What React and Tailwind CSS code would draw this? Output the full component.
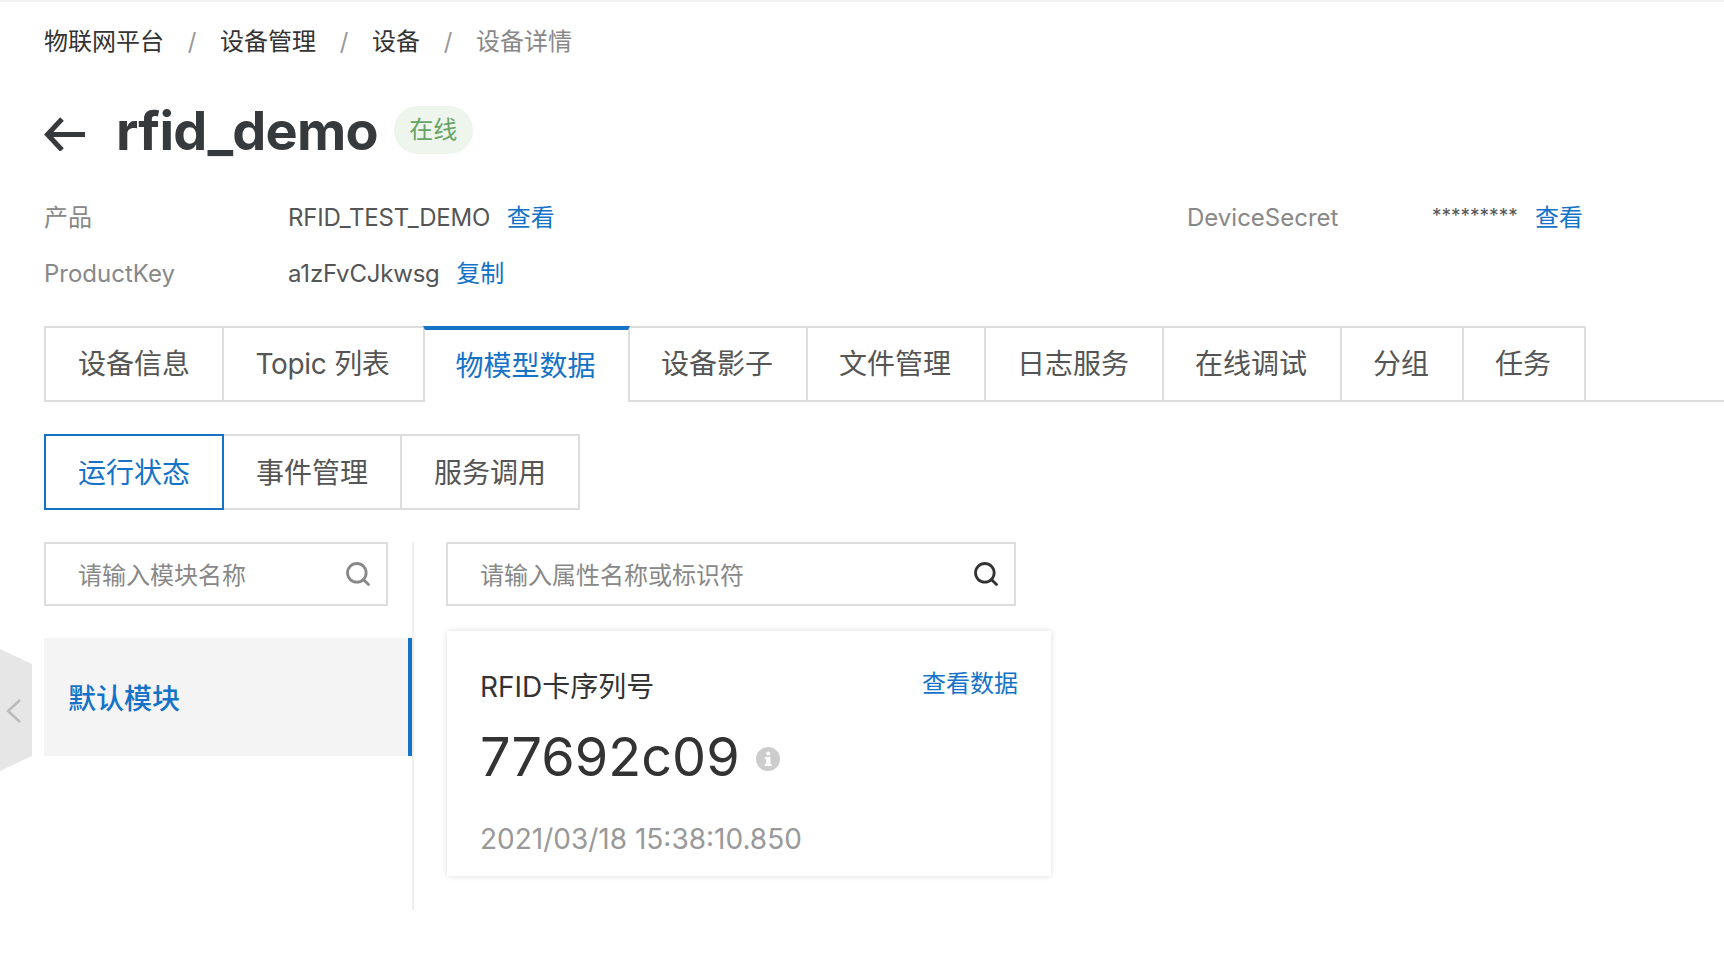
import React from 'react';
import { Search } from 'lucide-react';

const FONT = '[font-family:Inter,"Noto_Sans_CJK_SC",sans-serif]';

const mainTabs = [
    { label: '设备信息', w: 'w-[180px]' },
    { label: 'Topic 列表', w: 'w-[203px]', tight: true },
    { label: '物模型数据', w: 'w-[207px]', active: true },
    { label: '设备影子', w: 'w-[180px]' },
    { label: '文件管理', w: 'w-[180px]' },
    { label: '日志服务', w: 'w-[180px]' },
    { label: '在线调试', w: 'w-[180px]' },
    { label: '分组', w: 'w-[124px]' },
    { label: '任务', w: 'w-[124px]' },
];

function Breadcrumb() {
    return (
        <div className="flex items-center h-[34px] text-[24px] leading-[34px] text-[#333]">
            <span>物联网平台</span>
            <span className="w-[56px] text-center text-[#999]">/</span>
            <span>设备管理</span>
            <span className="w-[56px] text-center text-[#999]">/</span>
            <span>设备</span>
            <span className="w-[56px] text-center text-[#999]">/</span>
            <span className="text-[#888]">设备详情</span>
        </div>
    );
}

function InfoRows() {
    return (
        <div className="mt-[27px] grid grid-cols-[244px_899px_245px_auto] grid-rows-[56px_56px] items-center text-[24px] text-[#555]">
            <span className="text-[#888]">产品</span>
            <span className="tracking-[-0.2px]">RFID_TEST_DEMO <a className="ml-[10px] tracking-normal text-[#1473c8]">查看</a></span>
            <span className="text-[#888]">DeviceSecret</span>
            <span className="flex items-center">
                <span className="text-[19px] w-[96px] -mt-[4px]">*********</span>
                <a className="ml-[7px] text-[#1473c8]">查看</a>
            </span>
            <span className="text-[#888]">ProductKey</span>
            <span className="tracking-[-0.2px]">a1zFvCJkwsg <a className="ml-[10px] tracking-normal text-[#1473c8]">复制</a></span>
        </div>
    );
}

function MainTabs() {
    return (
        <div className="mt-[24px] -mr-[44px] flex h-[76px] border-b-2 border-[#ddd]">
            {mainTabs.map((tab) => (
                <div
                    key={tab.label}
                    className={`${tab.w} ${tab.tight ? 'tracking-[-0.3px]' : ''} -ml-[2px] first:ml-0 first:pr-0 pr-[2px] flex items-center justify-center text-[28px] border-2 ${
                        tab.active
                            ? 'h-[76px] border-[#ddd] border-t-[4px] border-t-[#1473c8] border-b-0 bg-white text-[#1473c8] z-10'
                            : 'h-[74px] border-[#ddd] border-b-0 text-[#555]'
                    }`}
                >
                    {tab.label}
                </div>
            ))}
        </div>
    );
}

function SubTabs() {
    return (
        <div className="mt-[32px] flex h-[76px] text-[28px]">
            <div className="w-[180px] z-10 pt-[2px] flex items-center justify-center border-2 border-[#1473c8] text-[#1473c8]">运行状态</div>
            <div className="w-[180px] -ml-[2px] pt-[2px] flex items-center justify-center border-2 border-[#ddd] text-[#555]">事件管理</div>
            <div className="w-[180px] -ml-[2px] pt-[2px] flex items-center justify-center border-2 border-[#ddd] text-[#555]">服务调用</div>
        </div>
    );
}

function SearchBox({ placeholder, className, iconColor }) {
    return (
        <div className={`${className} h-[64px] flex items-center justify-between pl-[32px] pr-[14px] border-2 border-[#ddd]`}>
            <span className="mt-[3px] text-[24px] text-[#888]">{placeholder}</span>
            <Search size={28} strokeWidth={2.4} className={`${iconColor} -mt-[1px]`} />
        </div>
    );
}

function InfoIcon() {
    return (
        <svg width="24" height="24" viewBox="0 0 24 24" className="ml-[16px] mt-[4px]">
            <circle cx="12" cy="12" r="12" fill="#ccc" />
            <rect x="10" y="10" width="4.4" height="9" fill="#fff" />
            <rect x="8.8" y="10" width="3" height="2" fill="#fff" />
            <rect x="8.8" y="17" width="7" height="2" fill="#fff" />
            <circle cx="12.2" cy="6.6" r="2" fill="#fff" />
        </svg>
    );
}

export default function App() {
    return (
        <div className={`relative min-h-[964px] bg-white overflow-hidden pl-[44px] pr-0 pt-[25px] ${FONT}`}>
            {/* sombra fina arriba */}
            <div className="absolute left-0 right-0 top-0 h-[2px] bg-[#f2f2f2]" />

            <div className="w-[1680px]">
                <Breadcrumb />

                <div className="mt-[40px] flex items-center h-[64px]">
                    <svg width="41" height="36" viewBox="0 0 41 36" fill="none" stroke="#373a3d" strokeWidth="5" className="mt-[3px]">
                        <path d="M41 19.5H4" />
                        <path d="M18 4L3.5 19.5L18 35" />
                    </svg>
                    <h1 className="ml-[31px] text-[54px] leading-[64px] font-bold tracking-[-0.8px] text-[#373a3d]">rfid_demo</h1>
                    <span className="ml-[16px] -mt-[2px] w-[79px] h-[48px] rounded-[24px] bg-[#edf5ec] flex items-center justify-center text-[24px] text-[#67a467]">在线</span>
                </div>

                <InfoRows />
                <MainTabs />
                <SubTabs />

                <div className="mt-[32px] flex">
                    {/* Columna de módulos */}
                    <div className="w-[370px] h-[368px] border-r-2 border-[#eee]">
                        <SearchBox placeholder="请输入模块名称" className="w-[344px]" iconColor="text-[#888]" />
                        <div className="mt-[32px] h-[118px] flex items-center pl-[24px] pt-[3px] bg-[#f4f4f4] border-r-[4px] border-[#1473c8] text-[28px] font-medium text-[#1473c8]">
                            默认模块
                        </div>
                    </div>

                    {/* Columna de propiedades */}
                    <div className="ml-[32px]">
                        <SearchBox placeholder="请输入属性名称或标识符" className="w-[570px]" iconColor="text-[#333]" />
                        <div className="mt-[25px] ml-[1px] w-[604px] h-[245px] px-[33px] pt-[36px] shadow-[0_0_6px_rgba(0,0,0,0.14)] bg-white">
                            <div className="flex justify-between h-[40px]">
                                <span className="text-[28px] leading-[40px] text-[#333]">RFID卡序列号</span>
                                <a className="text-[24px] leading-[34px] text-[#1473c8]">查看数据</a>
                            </div>
                            <div className="mt-[16px] flex items-center h-[68px]">
                                <span className="text-[54px] leading-[68px] text-[#333]">77692c09</span>
                                <InfoIcon />
                            </div>
                            <div className="mt-[30px] text-[28px] leading-[36px] text-[#999]">2021/03/18 15:38:10.850</div>
                        </div>
                    </div>
                </div>
            </div>

            {/* Pestaña para colapsar la barra lateral */}
            <svg width="32" height="122" viewBox="0 0 32 122" className="absolute left-0 top-[649px]">
                <path d="M0 0L32 15V107L0 122Z" fill="#e6e6e6" />
                <path d="M20 51L8 62L20 73" fill="none" stroke="#bbb" strokeWidth="2.5" />
            </svg>
        </div>
    );
}
